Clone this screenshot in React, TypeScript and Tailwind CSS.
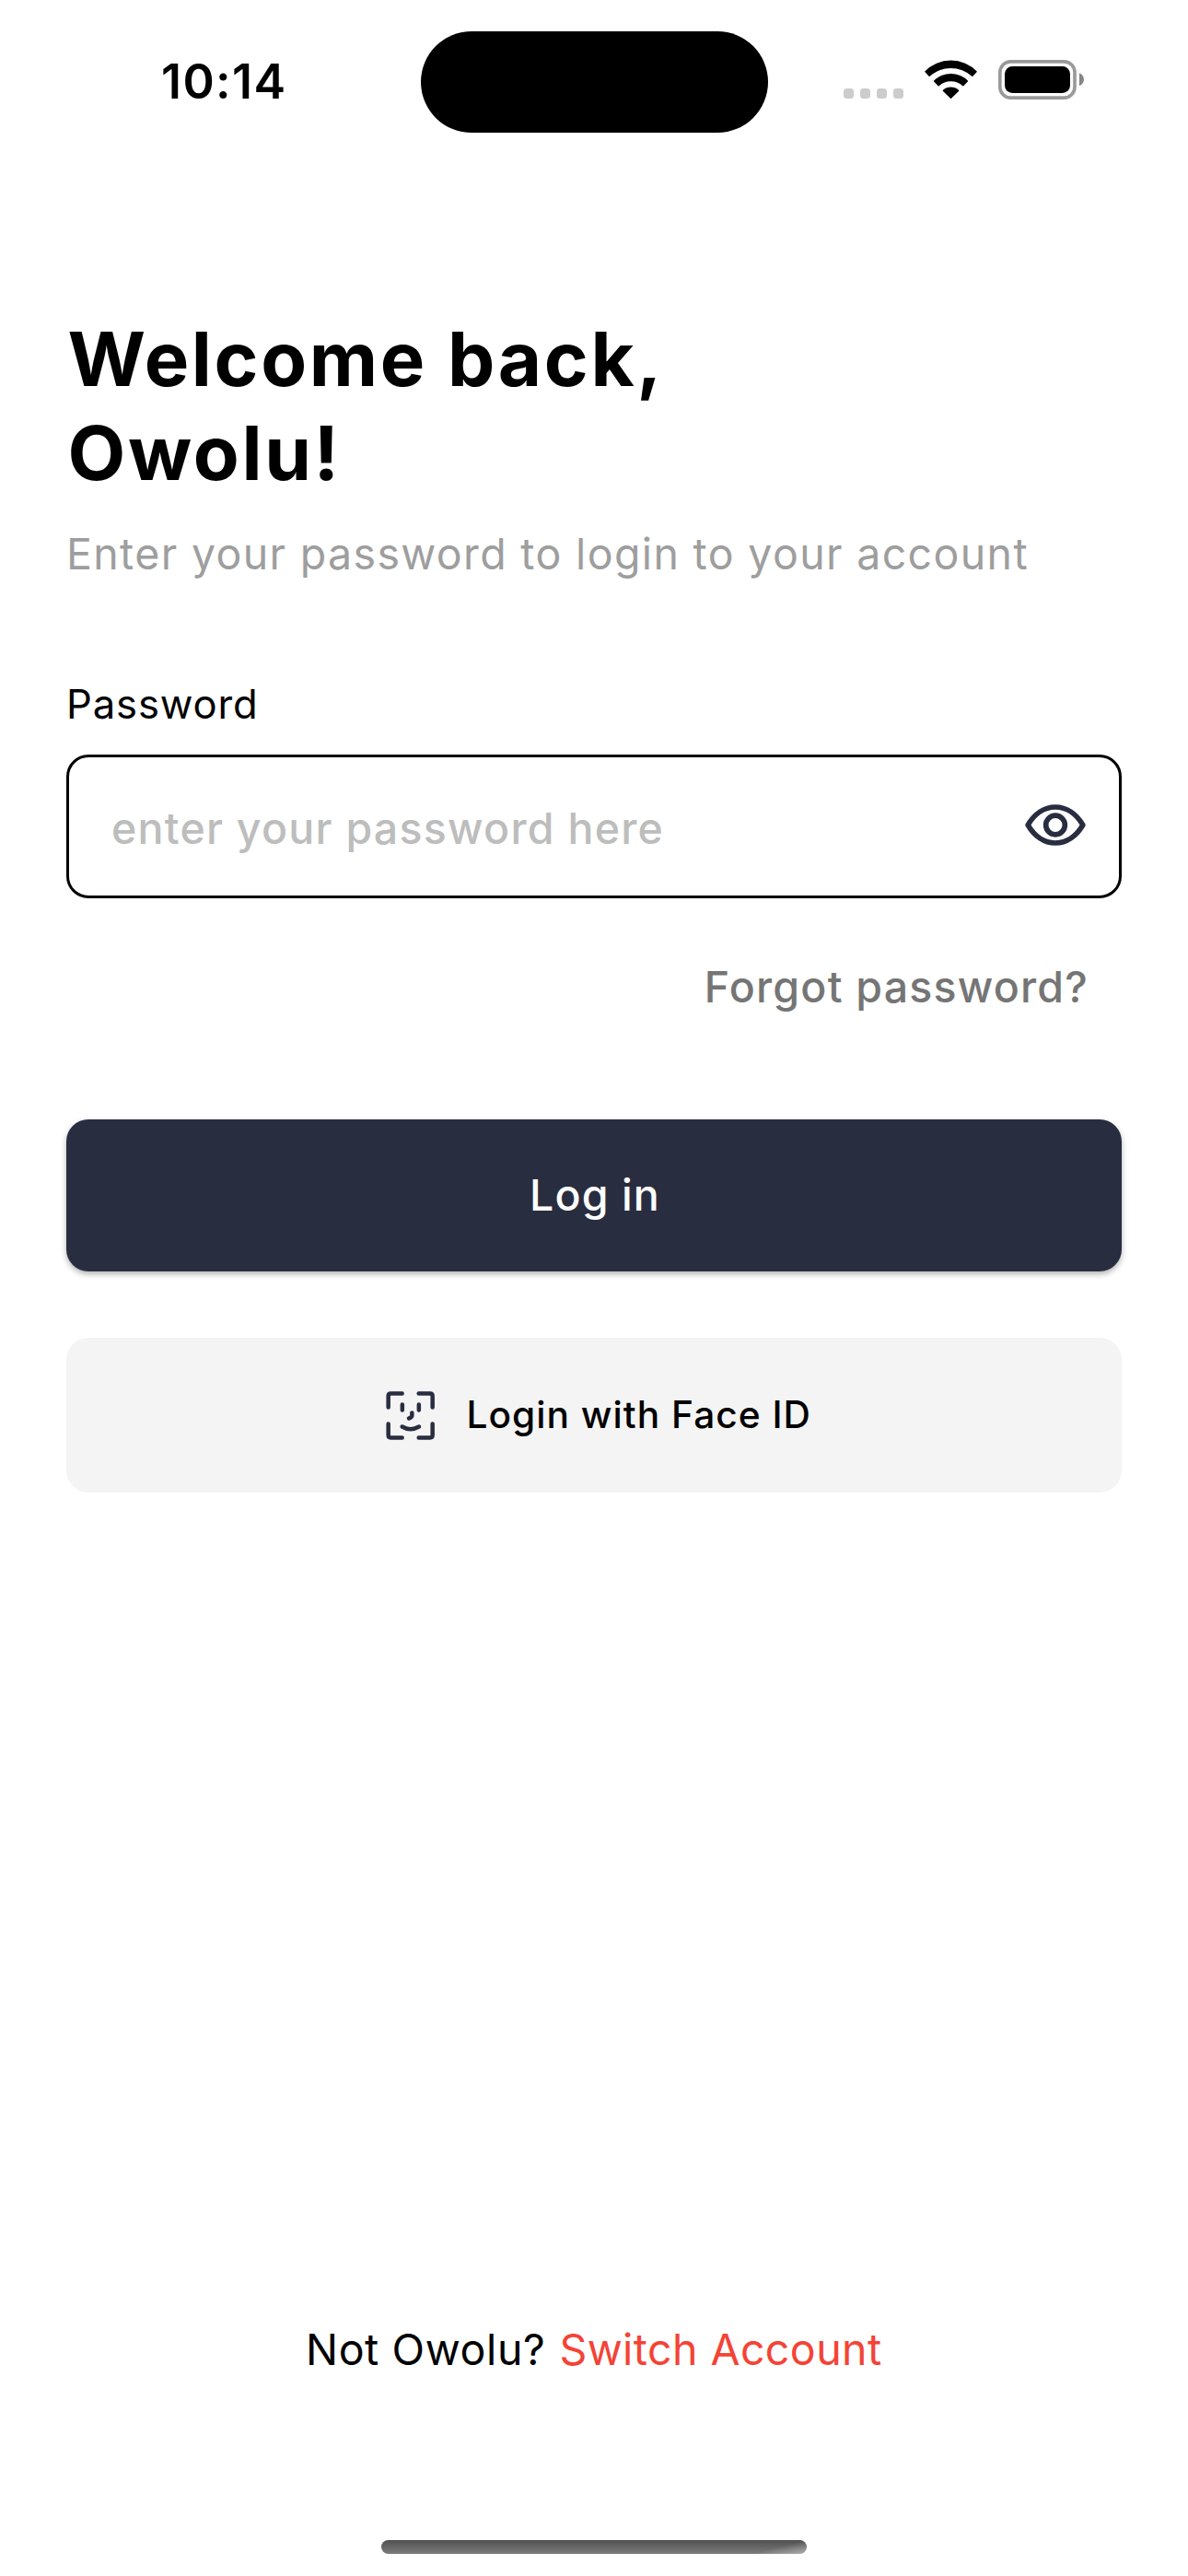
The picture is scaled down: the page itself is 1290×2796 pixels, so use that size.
function StatusBar() {
  return (
    <header className="flex h-[177px] shrink-0 items-center pl-[175px]">
      <time className="w-[282px] text-[52px] leading-[60px] font-semibold tracking-[1.4px]">10:14</time>
      <div className="mt-px h-[110px] w-[377px] rounded-full bg-black" />
      <div className="mb-[4px] ml-[82px] flex h-[43px] items-end gap-[23px]">
        <div className="mb-px flex gap-[7px]">
          {[0, 1, 2, 3].map((dot) => (
            <span key={dot} className="size-[11px] rounded-[3.5px] bg-[#cccccc]" />
          ))}
        </div>
        <svg className="mb-px h-[42px] w-[57px]" viewBox="612 135 171 126" aria-label="Wi-Fi">
          <path d="M612 173A119 119 0 0 1 783 173L769 188.500Q767.500 190 766 188.500A101 101 0 0 0 629 188.500Q627.500 190 626 188.500Z" />
          <path d="M641 204A78 78 0 0 1 754 204L739 219.500Q737.500 221 736 219.500A57 57 0 0 0 659 219.500Q657.500 221 656 219.500Z" />
          <path d="M672 237Q670.500 235 672 233.500A38 38 0 0 1 723 233.500Q724.500 235 723 237L699 260Q697.500 261.500 696 260Z" />
        </svg>
        <svg className="h-[43px] w-[93px]" viewBox="852 135 279 129" aria-label="Battery">
          <rect x="857.500" y="140.500" width="243.500" height="118" rx="35" fill="none" stroke="#9a9a9a" strokeWidth="11" />
          <rect x="873" y="156" width="213" height="87" rx="25" />
          <path d="M1116 178C1136 186 1136 212 1116 220Z" fill="#868686" />
        </svg>
      </div>
    </header>
  );
}

function EyeIcon() {
  return (
    <svg
      className="mt-[-4px] h-[45px] w-[66px]"
      viewBox="189 218.500 198 135"
      fill="none"
      stroke="#292d40"
      strokeWidth="17"
      strokeLinejoin="round"
    >
      <path d="M198.500 286C219 251 251 227.500 288 227.500S357 251 377.500 286C357 321 325 344.500 288 344.500S219 321 198.500 286Z" />
      <circle cx="288" cy="286" r="31" />
    </svg>
  );
}

function FaceIcon() {
  return (
    <svg
      className="size-[53px]"
      viewBox="57 88.500 159 159"
      fill="none"
      stroke="#292d40"
      strokeWidth="13.500"
      strokeLinecap="round"
      strokeLinejoin="round"
    >
      <path d="M110 96H73Q65 96 65 104V141" />
      <path d="M164 96H201Q209 96 209 104V141" />
      <path d="M65 195V232Q65 240 73 240H110" />
      <path d="M209 195V232Q209 240 201 240H164" />
      <path d="M110.500 132V150M164.500 132V150" />
      <path d="M142 159V169Q140 175 132 177" />
      <path d="M110 204Q137 220 165 204" />
    </svg>
  );
}

export default function App() {
  return (
    <div className="flex h-[2796px] w-[1290px] flex-col bg-white font-['Inter',sans-serif] text-black">
      <StatusBar />
      <main className="flex flex-1 flex-col px-[72px] pt-[162px]">
        <h1 className="pl-[1.5px] text-[81.5px] leading-[102px] font-bold tracking-[2.65px]">
          Welcome back,
          <br />
          Owolu!
        </h1>
        <p className="mt-[28px] text-[46.5px] leading-[60px] tracking-[1.34px] whitespace-nowrap text-[#9e9e9e]">
          Enter your password to login to your account
        </p>
        <label htmlFor="password" className="mt-[107px] text-[43.6px] leading-[54px] tracking-[0.85px]">
          Password
        </label>
        <div className="mt-[27px] flex h-[156px] items-center rounded-[24px] border-[3px] border-black pr-[36px] pl-[46px]">
          <input
            id="password"
            type="password"
            placeholder="enter your password here"
            className="mt-[4px] h-[60px] min-w-0 flex-1 text-[46.5px] leading-[60px] font-medium tracking-[1.25px] outline-none placeholder:text-[#bdbdbd] placeholder:opacity-100"
          />
          <EyeIcon />
        </div>
        <a className="mt-[66px] mr-[36px] self-end text-[46.5px] leading-[60px] font-medium tracking-[1.2px] text-[#757575]">
          Forgot password?
        </a>
        <button className="mt-[114px] h-[165px] rounded-[24px] bg-[#292d40] pb-[2px] pl-[2px] text-[46.5px] leading-[60px] font-medium tracking-[1.1px] text-white shadow-[0_3px_6px_rgba(0,0,0,0.3)]">
          Log in
        </button>
        <button className="mt-[72px] flex h-[168px] items-center gap-[34.5px] rounded-[24px] bg-[#f4f4f4] pl-[347px] text-[40.7px] leading-[54px] font-medium tracking-[1px]">
          <FaceIcon />
          <span>Login with Face ID</span>
        </button>
        <p className="mt-auto mb-[177px] flex gap-[15px] pl-[260px] text-[46.5px] leading-[60px]">
          <span className="tracking-[0.6px]">Not Owolu?</span>
          <a className="tracking-[0.42px] text-[#f44336]">Switch Account</a>
        </p>
      </main>
      <div className="mb-[24px] ml-[414px] h-[15px] w-[462px] shrink-0 overflow-hidden rounded-full bg-linear-to-b from-[#505050] to-[#7c7c7c]">
        <div className="ml-auto h-full w-[60px] bg-linear-to-br from-transparent from-50% to-white/40" />
      </div>
    </div>
  );
}
